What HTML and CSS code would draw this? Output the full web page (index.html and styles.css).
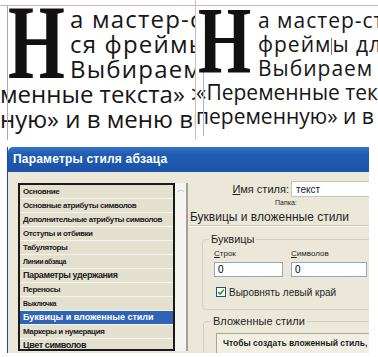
FILE: index.html
```html
<!DOCTYPE html>
<html lang="ru">
<head>
    <meta charset="UTF-8">
    <meta name="viewport" content="width=device-width, initial-scale=1.0">
    <title>Параметры стиля абзаца</title>
    <link rel="stylesheet" href="styles.css">
</head>
<body>
    <div class="spread">
        <div class="page page-left">
            <div class="guide guide-left"></div>
            <div class="frame">
                <div class="drop"><span>Н</span></div>
                <div class="line wide">а мастер-страницах</div>
                <div class="line wide">ся фреймы для</div>
                <div class="line wide">Выбираем «Текст»</div>
                <div class="line">менные текста» &gt; «Определить</div>
                <div class="line">ную» и в меню выбираем</div>
            </div>
        </div>
        <div class="page page-right">
            <div class="guide guide-right"></div>
            <div class="frame">
                <div class="drop"><span>Н</span></div>
                <div class="line wide">а мастер-страницах</div>
                <div class="line wide">фрейм<span class="caret"></span>ы для текста</div>
                <div class="line wide">Выбираем «Текст»</div>
                <div class="line">«Переменные текста»</div>
                <div class="line">переменную» и в меню</div>
            </div>
        </div>
    </div>

    <div class="dialog">
        <div class="titlebar">Параметры стиля абзаца</div>
        <div class="dialog-body">
            <div class="listbox">
                <ul class="list">
                    <li>Основние</li>
                    <li>Основные атрибуты символов</li>
                    <li>Дополнительные атрибуты символов</li>
                    <li>Отступы и отбивки</li>
                    <li>Табуляторы</li>
                    <li class="sm">Линии абзаца</li>
                    <li class="lg">Параметры удержания</li>
                    <li>Переносы</li>
                    <li class="sm">Выключка</li>
                    <li class="lg selected">Буквицы и вложенные стили</li>
                    <li>Маркеры и нумерация</li>
                    <li class="lg">Цвет символов</li>
                </ul>
                <div class="scrollbar"><span class="arrow">︿</span></div>
            </div>

            <div class="props">
                <div class="name-row">
                    <label for="styleName"><u>И</u>мя стиля:</label>
                    <input type="text" id="styleName" value="текст">
                </div>
                <div class="folder">Папка:</div>
                <div class="section-title">Буквицы и вложенные стили</div>

                <fieldset class="group">
                    <legend>Буквицы</legend>
                    <div class="group-inner">
                        <div class="fields">
                            <div class="field">
                                <label><u>С</u>трок</label>
                                <input type="text" value="0">
                            </div>
                            <div class="field field-wide">
                                <label><u>С</u>имволов</label>
                                <input type="text" value="0">
                            </div>
                        </div>
                        <div class="check-row">
                            <svg class="check" width="10" height="10" viewBox="0 0 10 10">
                                <rect x="0.5" y="0.5" width="9" height="9" fill="#fff" stroke="#1c5180"/>
                                <path d="M2.2 5 L4.2 7 L7.8 2.8" fill="none" stroke="#21a121" stroke-width="1.6"/>
                            </svg>
                            <span>Выровнять левый край</span>
                        </div>
                    </div>
                </fieldset>

                <fieldset class="group group-nested">
                    <legend>Вложенные стили</legend>
                    <div class="nested-box">Чтобы создать вложенный стиль,</div>
                </fieldset>
            </div>
        </div>
    </div>
</body>
</html>
```

FILE: styles.css
```css
body {
    margin: 0;
    width: 378px;
    height: 357px;
    overflow: hidden;
    background-color: #fff;
    font-family: 'Liberation Sans', Arial, sans-serif;
}

/* two magnified page crops on top */

.spread {
    display: flex;
    height: 147px;
}

.page {
    position: relative;
    height: 140px;
    padding-top: 5px;
    box-sizing: border-box;
    overflow: hidden;
    font-family: 'Open Sans', Lato, sans-serif;
    color: #161616;
}

.page-left {
    width: 196px;
    border-right: 1px solid #cdbcc2;
}

.page-right {
    flex: 1;
}

.frame {
    border-top: 1px solid #dcaab8;
    height: 100%;
}

.line {
    white-space: nowrap;
}

.drop {
    float: left;
    font-family: 'Liberation Serif', 'Times New Roman', serif;
    font-weight: bold;
    color: #111;
}

.drop span {
    display: inline-block;
    transform-origin: left center;
}

.page-left .line {
    font-size: 24px;
    line-height: 25px;
}

.page-left .line.wide {
    letter-spacing: 1.2px;
}

.page-left .drop {
    width: 57px;
    margin: 0 5px 0 8px;
    font-size: 106px;
    line-height: 74px;
    height: 74px;
}

.page-left .drop span {
    transform: scaleX(0.69);
}

.page-right .frame {
    padding-top: 2px;
    box-sizing: border-box;
}

.page-right .line {
    font-size: 21px;
    line-height: 24px;
}

.page-right .line.wide {
    letter-spacing: 1px;
}

.page-right .drop {
    width: 53px;
    margin: 0 7px 0 2px;
    font-size: 95px;
    line-height: 66px;
    height: 66px;
}

.page-right .drop span {
    transform: scaleX(0.72);
}

.caret {
    display: inline-block;
    width: 0;
    height: 17px;
    border-left: 1px solid #777;
    vertical-align: -3px;
}

.guide {
    position: absolute;
    width: 1px;
}

.guide-left {
    left: 7px;
    top: 5px;
    bottom: 0;
    background-color: #aaa3cc;
}

.guide-right {
    left: 7px;
    top: 72px;
    bottom: 4px;
    background-color: #9fb8d8;
}

/* dialog */

.dialog {
    margin-left: 7px;
    width: 362px;
    height: 206px;
    border-left: 1px solid #1d4d9a;
    box-sizing: border-box;
    overflow: hidden;
}

.titlebar {
    height: 25px;
    line-height: 25px;
    padding-left: 5px;
    border-top-left-radius: 5px;
    background: linear-gradient(#3573c8, #1f5cb2 30%, #1a54a8);
    color: #fff;
    font-weight: bold;
    font-size: 12px;
    letter-spacing: 0.2px;
}

.dialog-body {
    display: flex;
    height: 181px;
    padding-top: 9px;
    box-sizing: border-box;
    background-color: #ebe8d9;
}

.listbox {
    display: flex;
    flex-shrink: 0;
    margin: 2px 0 0 10px;
    height: 168px;
}

.list {
    list-style: none;
    margin: 0;
    padding: 0;
    width: 157px;
    border: 2px solid #1a1a1a;
    box-sizing: border-box;
    overflow: hidden;
    background-color: #e4e0d0;
}

.list li {
    height: 14px;
    line-height: 13px;
    padding-left: 3px;
    border-bottom: 1px solid #f6f4ec;
    box-sizing: border-box;
    white-space: nowrap;
    font-size: 8px;
    font-weight: bold;
    letter-spacing: -0.4px;
    color: #1b1b1b;
}

.list li.sm {
    font-size: 7px;
}

.list li.lg {
    font-size: 9px;
}

.list li.selected {
    background-color: #2f63b5;
    color: #fff;
    letter-spacing: 0;
}

.scrollbar {
    width: 11px;
    background-color: #f5f4ee;
    border-right: 2px solid #a3a097;
    text-align: center;
}

.arrow {
    display: block;
    margin-top: 2px;
    font-size: 8px;
    line-height: 10px;
    color: #b0aca0;
}

.props {
    flex: 1;
    min-width: 0;
    padding-left: 2px;
    font-size: 11px;
    color: #1e1e1e;
}

.name-row {
    display: flex;
    justify-content: flex-end;
    align-items: center;
    height: 16px;
}

.name-row label {
    margin-right: 2px;
}

.name-row input {
    width: 78px;
    height: 16px;
    box-sizing: border-box;
    margin: 0;
    padding: 0 4px;
    border: 1px solid #c9c6b9;
    border-right: none;
    background-color: #fff;
    font-family: 'Liberation Sans', Arial, sans-serif;
    font-size: 10px;
    color: #222;
}

.folder {
    height: 12px;
    line-height: 12px;
    padding-left: 85px;
    font-size: 7px;
}

.section-title {
    height: 16px;
    line-height: 16px;
    font-size: 12px;
    white-space: nowrap;
    border-bottom: 1px solid #c8c5b5;
    box-shadow: 0 1px 0 #fbfaf4;
}

.group {
    width: 200px;
    margin: 7px 0 0 12px;
    padding: 0 0 0 6px;
    border: 1px solid #d2cfbe;
    border-radius: 4px;
    box-sizing: border-box;
}

.group legend {
    padding: 0 2px;
    font-size: 11px;
    line-height: 13px;
}

.group-inner {
    padding: 2px 0 11px 5px;
}

.fields {
    display: flex;
    gap: 8px;
}

.field label {
    display: block;
    height: 12px;
    line-height: 12px;
    font-size: 8px;
}

.field input {
    display: block;
    width: 69px;
    height: 15px;
    box-sizing: border-box;
    margin: 2px 0 0;
    padding: 0 3px;
    border: 1px solid #8fa7c4;
    background-color: #fff;
    font-family: 'Liberation Sans', Arial, sans-serif;
    font-size: 10px;
}

.field-wide input {
    width: 76px;
}

.check-row {
    display: flex;
    align-items: center;
    gap: 3px;
    height: 12px;
    margin: 9px 0 0 2px;
    font-size: 10px;
    white-space: nowrap;
}

.group-nested {
    margin-top: 5px;
    margin-left: 13px;
    padding-left: 7px;
    height: 40px;
}

.nested-box {
    margin: 5px 0 0 5px;
    height: 30px;
    padding: 4px 0 0 6px;
    box-sizing: border-box;
    border: 1px solid #a9a697;
    background-color: #f1efe3;
    font-size: 8.5px;
    font-weight: bold;
    white-space: nowrap;
}
```
